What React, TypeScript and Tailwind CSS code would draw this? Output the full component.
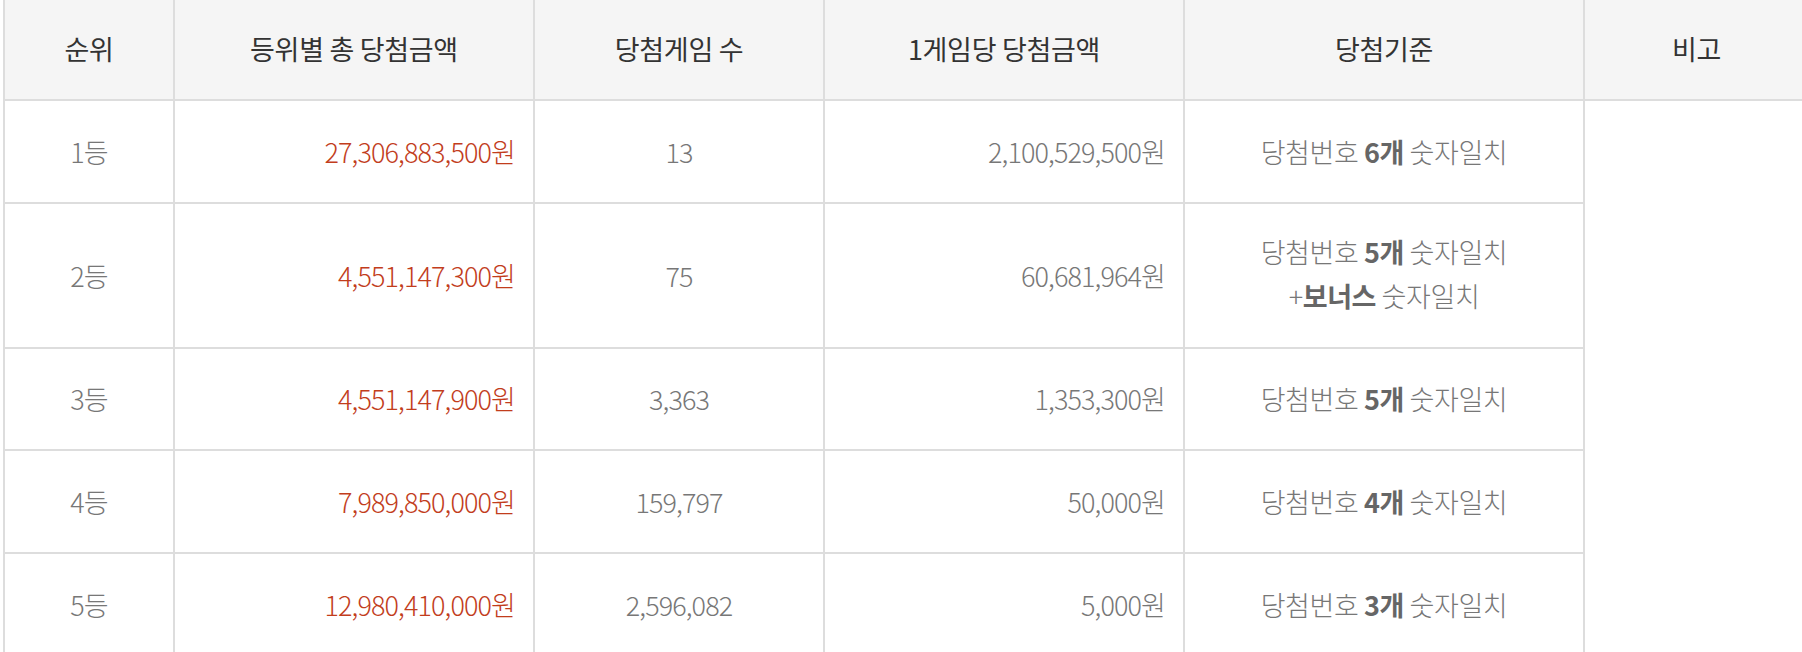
import React from "react";

type Row = {
  rank: string;
  total: string;
  count: string;
  per: string;
  criteria: React.ReactNode;
  h: string;
  cpad?: string;
};

const B = ({ children }: { children: React.ReactNode }) => (
  <b className="font-bold text-[#666]">{children}</b>
);

const rows: Row[] = [
  {
    rank: "1등",
    total: "27,306,883,500원",
    count: "13",
    per: "2,100,529,500원",
    criteria: (
      <>
        당첨번호 <B>6개</B> 숫자일치
      </>
    ),
    h: "h-[103px]",
  },
  {
    rank: "2등",
    total: "4,551,147,300원",
    count: "75",
    per: "60,681,964원",
    criteria: (
      <>
        당첨번호 <B>5개</B> 숫자일치
        <br />+<B>보너스</B> 숫자일치
      </>
    ),
    h: "h-[145px]",
    cpad: "pb-[4px]",
  },
  {
    rank: "3등",
    total: "4,551,147,900원",
    count: "3,363",
    per: "1,353,300원",
    criteria: (
      <>
        당첨번호 <B>5개</B> 숫자일치
      </>
    ),
    h: "h-[102px]",
  },
  {
    rank: "4등",
    total: "7,989,850,000원",
    count: "159,797",
    per: "50,000원",
    criteria: (
      <>
        당첨번호 <B>4개</B> 숫자일치
      </>
    ),
    h: "h-[103px]",
  },
  {
    rank: "5등",
    total: "12,980,410,000원",
    count: "2,596,082",
    per: "5,000원",
    criteria: (
      <>
        당첨번호 <B>3개</B> 숫자일치
      </>
    ),
    h: "h-[103px]",
  },
];

export default function App() {
  const th =
    "border-2 border-t-0 border-[#dddddd] bg-[#f5f5f5] font-normal text-[27px] tracking-[-0.3px] text-[#333] align-middle text-center";
  const td =
    "border-2 border-[#dddddd] text-[27px] font-light text-[#777] align-middle leading-[44px]";
  const num = "tracking-[-0.9px]";
  return (
    <div
      className="w-[1802px] h-[652px] overflow-hidden bg-white"
      style={{ fontFamily: '"Noto Sans CJK KR", "Noto Sans", sans-serif' }}
    >
      <table className="ml-[3px] w-[1805px] table-fixed border-collapse">
        <colgroup>
          <col className="w-[170px]" />
          <col className="w-[360px]" />
          <col className="w-[290px]" />
          <col className="w-[360px]" />
          <col className="w-[400px]" />
          <col className="w-[225px]" />
        </colgroup>
        <thead>
          <tr className="h-[100px]">
            <th className={th}>순위</th>
            <th className={th}>등위별 총 당첨금액</th>
            <th className={th}>당첨게임 수</th>
            <th className={th}>1게임당 당첨금액</th>
            <th className={th}>당첨기준</th>
            <th className={th}>비고</th>
          </tr>
        </thead>
        <tbody>
          {rows.map((r, i) => (
            <tr key={r.rank} className={r.h}>
              <td className={`${td} ${num} text-center`}>{r.rank}</td>
              <td
                className={`${td} ${num} text-right pr-[18px] text-[#c23d1c]`}
              >
                {r.total}
              </td>
              <td className={`${td} ${num} text-center`}>{r.count}</td>
              <td className={`${td} ${num} text-right pr-[18px]`}>{r.per}</td>
              <td
                className={`${td} text-center tracking-[-0.4px] ${r.cpad ?? ""}`}
              >
                {r.criteria}
              </td>
              {i === 0 && <td rowSpan={5} className={td}></td>}
            </tr>
          ))}
        </tbody>
      </table>
    </div>
  );
}
